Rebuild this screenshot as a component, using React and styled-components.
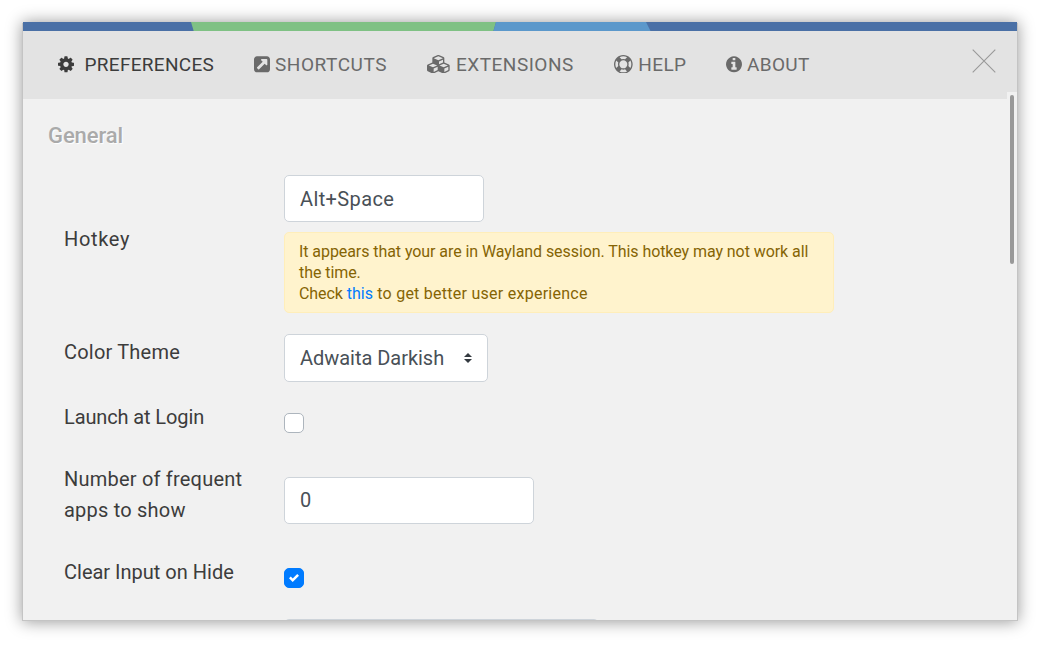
import React from "react";
import styled, { createGlobalStyle } from "styled-components";

const GlobalStyle = createGlobalStyle`
  * { box-sizing: border-box; }
  body { margin: 0; background: #fff; font-family: Roboto, "Liberation Sans", sans-serif; overflow: hidden; }
`;

const Page = styled.div`
  width: 1040px;
  height: 655px;
  padding: 22px 23px 35px;
`;

const Window = styled.main`
  position: relative;
  height: 598px;
  background: #f1f1f1;
  box-shadow: 1px 1px 0 0 #c4c4c4, -1px 1px 0 0 #c4c4c4, 0 1px 15px 1px rgba(0, 0, 0, 0.4);
  display: flex;
  flex-direction: column;
`;

const Stripe = styled.svg`
  display: block;
  width: 994px;
  height: 9px;
  flex: none;
`;

const Header = styled.header`
  display: flex;
  align-items: flex-start;
  height: 68px;
  flex: none;
  padding-left: 35px;
  background: #e3e3e3;
`;

const Tab = styled.a`
  display: flex;
  align-items: center;
  gap: ${(p) => p.$gap}px;
  width: ${(p) => p.$width}px;
  height: 67px;
  color: ${(p) => (p.$active ? "#3c3c3c" : "#6a6a6a")};
  font-size: 19px;
  letter-spacing: ${(p) => p.$spacing ?? 0.35}px;
  white-space: nowrap;
`;

const Icon = styled.svg`
  flex: none;
  height: 18.67px;
  width: ${(p) => p.$width}px;
  margin-bottom: 1px;
  fill: currentColor;
`;

const Close = styled.button`
  margin: 18px 21px 0 auto;
  padding: 0;
  width: 24px;
  height: 24px;
  border: 0;
  background: none;
  svg { display: block; }
`;

const Scrollbar = styled.div`
  position: absolute;
  right: 0;
  top: 70px;
  width: 10px;
  height: 528px;
  padding: 3px 3px;
  background: #f1f1f1;
`;

const Thumb = styled.div`
  width: 4px;
  height: 169px;
  border-radius: 2px;
  background: #999;
`;

const Content = styled.section`
  flex: 1;
  min-height: 0;
  overflow: hidden;
  padding: 21px 10px 0 25px;
`;

const Heading = styled.h2`
  margin: 0;
  height: 55px;
  font-size: 22px;
  line-height: 32px;
  font-weight: 500;
  letter-spacing: -0.1px;
  color: #aaa;
  text-shadow: 1px 1px 1px #fff;
`;

const Row = styled.div`
  display: grid;
  grid-template-columns: 220px 550px;
  padding-left: 16px;
  height: ${(p) => p.$height}px;
`;

const Label = styled.label`
  padding-top: ${(p) => p.$top}px;
  font-size: 20px;
  line-height: 31px;
  letter-spacing: ${(p) => p.$spacing ?? 0.2}px;
  color: #3c3c3c;
`;

const Field = styled.div`
  padding-top: ${(p) => p.$top || 0}px;
`;

const Input = styled.div`
  display: flex;
  align-items: center;
  justify-content: space-between;
  width: ${(p) => p.$width}px;
  height: ${(p) => p.$height || 47}px;
  padding: ${(p) => p.$shift || 0}px 15px 0;
  border: 1px solid #ced4da;
  border-radius: 5px;
  background: #fff;
  color: #495057;
  font-size: 20px;
  line-height: 23px;
  letter-spacing: ${(p) => p.$spacing ?? 0.2}px;
`;

const Alert = styled.div`
  margin-top: 10px;
  height: 81px;
  padding: 8px 14px;
  border: 1px solid #ffeeba;
  border-radius: 5px;
  background: #fff3cd;
  color: #856404;
  font-size: 16px;
  line-height: 21px;
  letter-spacing: -0.07px;
  a { color: #007bff; letter-spacing: 0; }
`;

const AlertHint = styled.span`
  letter-spacing: 0.26px;
`;

const Checkbox = styled.div`
  display: grid;
  place-items: center;
  width: 20px;
  height: 20px;
  border: 1px solid ${(p) => (p.$checked ? "#007bff" : "#adb5bd")};
  border-radius: 5px;
  background: ${(p) => (p.$checked ? "#007bff" : "#fff")};
`;

const tabs = [
  {
    name: "PREFERENCES", width: 196, iconWidth: 16, gap: 10.5, spacing: 0.3, active: true, box: "128 0 1536 1792",
    path: "M1152 896q0-106-75-181t-181-75-181 75-75 181 75 181 181 75 181-75 75-181zm512-109v222q0 12-8 23t-20 13l-185 28q-19 54-39 91 35 50 107 138 10 12 10 25t-9 23q-27 37-99 108t-94 71q-12 0-26-9l-138-108q-44 23-91 38-16 136-29 186-7 28-36 28h-222q-14 0-24.5-8.5t-11.5-21.5l-28-184q-49-16-90-37l-141 107q-10 9-25 9-14 0-25-11-126-114-165-168-7-10-7-23 0-12 8-23 15-21 51-66.5t54-70.5q-27-50-41-99l-183-27q-13-2-21-12.5t-8-23.5v-222q0-12 8-23t19-13l186-28q14-46 39-92-40-57-107-138-10-12-10-24 0-10 9-23 26-36 98.5-107.5t94.5-71.5q13 0 26 10l138 107q44-23 91-38 16-136 29-186 7-28 36-28h222q14 0 24.5 8.5t11.5 21.5l28 184q49 16 90 37l142-107q9-9 24-9 13 0 25 10 129 119 165 170 7 8 7 22 0 12-8 23-15 21-51 66.5t-54 70.5q26 50 41 98l183 28q13 2 21 12.5t8 23.5z",
  },
  {
    name: "SHORTCUTS", width: 173, iconWidth: 16, gap: 5, spacing: 0.55, box: "128 0 1536 1792",
    path: "M1408 928v-480q0-26-19-45t-45-19h-480q-42 0-59 39-17 41 14 70l144 144-534 534q-19 19-19 45t19 45l102 102q19 19 45 19t45-19l534-534 144 144q18 19 45 19 12 0 25-5 39-17 39-59zm256-512v960q0 119-84.5 203.5t-203.5 84.5h-960q-119 0-203.5-84.5t-84.5-203.5v-960q0-119 84.5-203.5t203.5-84.5h960q119 0 203.5 84.5t84.5 203.5z",
  },
  {
    name: "EXTENSIONS", width: 187, iconWidth: 24, gap: 5, spacing: 0.5, box: "0 0 2304 1792",
    path: "M640 1632l384-192v-314l-384 164v342zm-64-454l404-173-404-173-404 173zm1088 454l384-192v-314l-384 164v342zm-64-454l404-173-404-173-404 173zm-448-293l384-165v-266l-384 164v267zm-64-379l441-189-441-189-441 189zm1088 518v416q0 36-19 67t-52 47l-448 224q-25 14-57 14t-57-14l-448-224q-4-2-7-4-2 2-7 4l-448 224q-25 14-57 14t-57-14l-448-224q-33-16-52-47t-19-67v-416q0-38 21.5-70t56.5-48l434-186v-400q0-38 21.5-70t56.5-48l448-192q23-10 50-10t50 10l448 192q35 16 56.5 48t21.5 70v400l434 186q36 16 57 48t21 70z",
  },
  {
    name: "HELP", width: 112, iconWidth: 18.67, gap: 5.7, box: "0 0 1792 1792",
    path: "M896 0q182 0 348 71t286 191 191 286 71 348-71 348-191 286-286 191-348 71-348-71-286-191-191-286-71-348 71-348 191-286 286-191 348-71zm0 128q-190 0-361 90l194 194q82-28 167-28t167 28l194-194q-171-90-361-90zm-678 1129l194-194q-28-82-28-167t28-167l-194-194q-90 171-90 361t90 361zm678 407q190 0 361-90l-194-194q-82 28-167 28t-167-28l-194 194q171 90 361 90zm0-384q159 0 271.5-112.5t112.5-271.5-112.5-271.5-271.5-112.5-271.5 112.5-112.5 271.5 112.5 271.5 271.5 112.5zm484-217l194 194q90-171 90-361t-90-361l-194 194q28 82 28 167t-28 167z",
  },
  {
    name: "ABOUT", width: 90, iconWidth: 16, gap: 5, box: "128 0 1536 1792",
    path: "M1152 1376v-160q0-14-9-23t-23-9h-96v-512q0-14-9-23t-23-9h-320q-14 0-23 9t-9 23v160q0 14 9 23t23 9h96v320h-96q-14 0-23 9t-9 23v160q0 14 9 23t23 9h448q14 0 23-9t9-23zm-128-896v-160q0-14-9-23t-23-9h-192q-14 0-23 9t-9 23v160q0 14 9 23t23 9h192q14 0 23-9t9-23zm640 416q0 209-103 385.5t-279.5 279.5-385.5 103-385.5-103-279.5-279.5-103-385.5 103-385.5 279.5-279.5 385.5-103 385.5 103 279.5 279.5 103 385.5z",
  },
];

export default function App() {
  return (
    <Page>
      <GlobalStyle />
      <Window>
        <Stripe viewBox="0 0 994 9">
          <path fill="#4a70a6" d="M0 0h994v9H0z" />
          <path fill="#7fc184" d="M168 0H473l-2.500 9H170.700z" />
          <path fill="#5b98cb" d="M473 0H623l4.500 9H470.500z" />
        </Stripe>
        <Header>
          {tabs.map((t) => (
            <Tab key={t.name} $width={t.width} $gap={t.gap} $active={t.active} $spacing={t.spacing}>
              <Icon viewBox={t.box} $width={t.iconWidth}><path d={t.path} /></Icon>
              {t.name}
            </Tab>
          ))}
          <Close aria-label="Close">
            <svg width="24" height="24" viewBox="0 0 24 24" stroke="#999" strokeWidth="1.1">
              <path d="M.7.700l22.600 22.600M23.300.700L.7 23.300" />
            </svg>
          </Close>
        </Header>
        <Content>
          <Heading>General</Heading>
          <Row $height={159}>
            <Label $top={49} $spacing={0.65}>Hotkey</Label>
            <Field>
              <Input $width={200} $spacing={0.37} $shift={2}>Alt+Space</Input>
              <Alert>
                It appears that your are in Wayland session. This hotkey may not work all the time.
                <br />
                Check <a>this</a>
                <AlertHint> to get better user experience</AlertHint>
              </Alert>
            </Field>
          </Row>
          <Row $height={66}>
            <Label $top={3}>Color Theme</Label>
            <Field>
              <Input $width={204} $height={48} $spacing={-0.03}>
                Adwaita Darkish
                <svg width="8" height="10" viewBox="0 0 4 5" fill="#343a40"><path d="M2 0L0 2h4zm0 5L0 3h4z" /></svg>
              </Input>
            </Field>
          </Row>
          <Row $height={61}>
            <Label $top={2} $spacing={-0.12}>Launch at Login</Label>
            <Field $top={13}><Checkbox /></Field>
          </Row>
          <Row $height={94}>
            <Label $top={3} $spacing={0.21}>Number of frequent apps to show</Label>
            <Field $top={16}><Input $width={250}>0</Input></Field>
          </Row>
          <Row $height={64}>
            <Label $top={2} $spacing={0}>Clear Input on Hide</Label>
            <Field $top={13}>
              <Checkbox $checked>
                <svg width="10" height="10" viewBox="0 0 8 8" fill="#fff"><path d="M6.564.75l-3.590 3.612-1.538-1.550L0 4.260 2.974 7.250 8 2.193z" /></svg>
              </Checkbox>
            </Field>
          </Row>
          <Row $height={48}>
            <Label $top={8} />
            <Field><Input $width={315} /></Field>
          </Row>
        </Content>
        <Scrollbar><Thumb /></Scrollbar>
      </Window>
    </Page>
  );
}
